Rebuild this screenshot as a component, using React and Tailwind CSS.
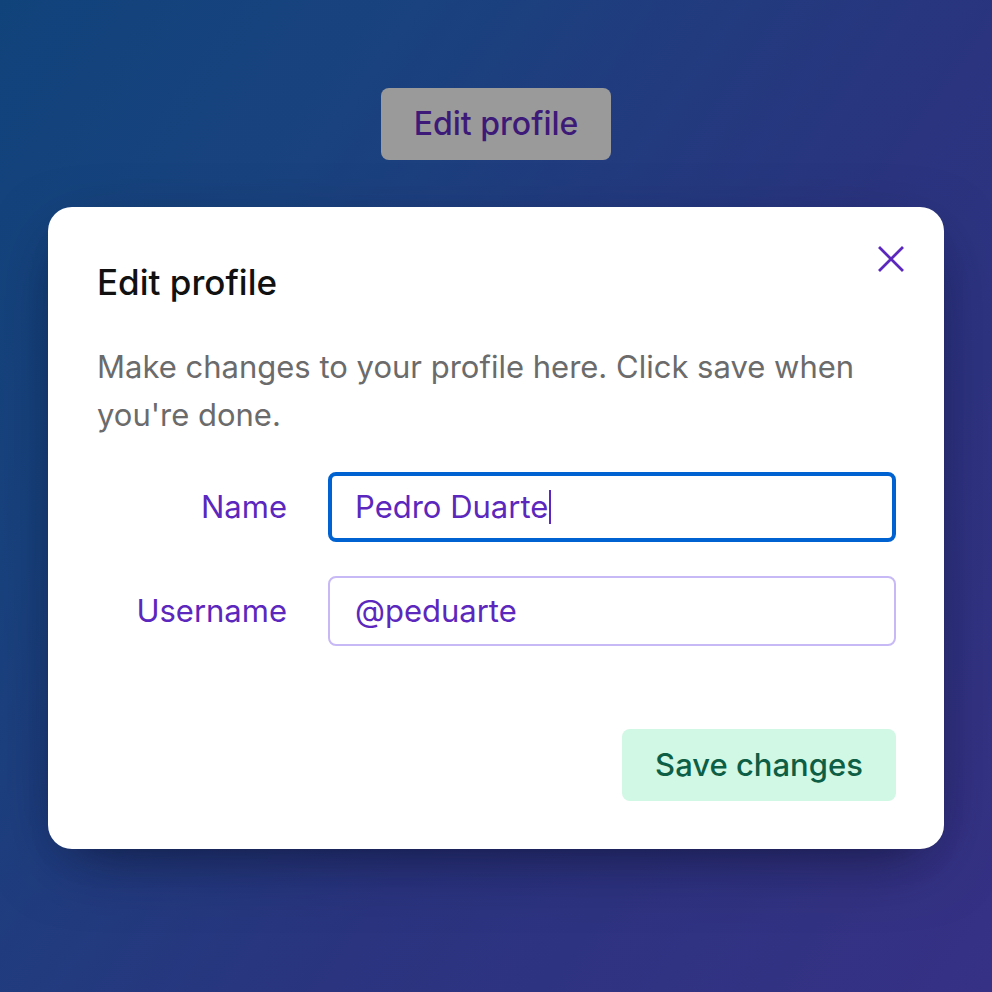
import React from 'react';

function CloseIcon() {
  return (
    <svg width="26" height="26" viewBox="0 0 26 26" fill="none" stroke="currentColor" strokeWidth="2.8" strokeLinecap="square">
      <path d="M2 2L24 24M24 2L2 24" />
    </svg>
  );
}

function Field({ label, value, focused }) {
  return (
    <div className="flex h-[70px] items-center gap-[41px]">
      <label className="w-[190px] shrink-0 text-right text-[31px] text-[#5b27bd]">{label}</label>
      <div
        className={[
          'flex h-[70px] flex-1 items-center rounded-[8px] bg-white text-[31px] text-[#5b27bd]',
          focused ? 'border-[4px] border-[#0062d1] pl-[23px]' : 'border-2 border-[#c7b9f5] pl-[25px]',
        ].join(' ')}
      >
        <span>{value}</span>
        {focused ? <span className="ml-px h-[34px] w-[2px] bg-[#5b27bd]" /> : null}
      </div>
    </div>
  );
}

export default function App() {
  return (
    <div
      className="flex min-h-[992px] w-full flex-col items-center bg-[linear-gradient(305deg,#363185_0%,#2a347f_40%,#19427e_75%,#11437b_100%)] pt-[88px]"
      style={{ fontFamily: 'Inter, "Noto Sans", sans-serif' }}
    >
      <button
        type="button"
        className="flex h-[72px] w-[230px] items-center justify-center rounded-[8px] bg-[#9a9a9a] text-[32px] font-medium text-[#3d1a78]"
      >
        Edit profile
      </button>

      <div className="relative mt-[47px] w-[896px] rounded-[24px] bg-white pl-[49px] pr-[48px] pt-[54px] pb-[48px] shadow-[0_20px_70px_-20px_rgba(8,10,30,0.55),0_20px_40px_-30px_rgba(8,10,30,0.35)]">
        <button
          type="button"
          className="absolute right-[38px] top-[37px] flex h-[30px] w-[30px] items-center justify-center text-[#5b27bd]"
        >
          <CloseIcon />
        </button>

        <h2 className="text-[35px] font-medium leading-[42px] text-[#111]">Edit profile</h2>
        <p className="mt-[40px] text-[31px] leading-[48px] text-[#6b6b6b]">
          Make changes to your profile here. Click save when you're done.
        </p>

        <div className="mt-[33px] flex flex-col gap-[34px]">
          <Field label="Name" value="Pedro Duarte" focused />
          <Field label="Username" value="@peduarte" />
        </div>

        <div className="mt-[83px] flex justify-end">
          <button
            type="button"
            className="flex h-[72px] w-[274px] items-center justify-center rounded-[8px] bg-[#d0f8e4] text-[31px] font-medium text-[#0d5e44]"
          >
            Save changes
          </button>
        </div>
      </div>
    </div>
  );
}
